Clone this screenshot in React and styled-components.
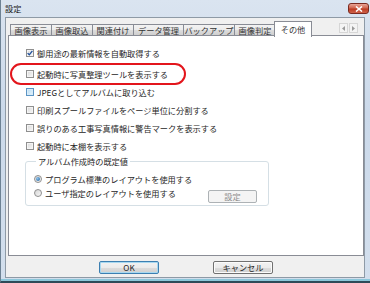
import React from "react"
import styled, { createGlobalStyle } from "styled-components"

const GlobalStyle = createGlobalStyle`
    html, body {
        margin: 0;
        padding: 0;
        background: #ffffff;
    }
    body {
        font-family: "Noto Sans CJK JP", "Noto Sans", sans-serif;
        font-size: 8.2px;
        color: #262626;
    }
`;

const Frame = styled.div`
    width: 370px;
    height: 283px;
    box-sizing: border-box;
    display: flex;
    flex-direction: column;
    background: linear-gradient(#dae4f0, #cbd9ea 40%, #d3dfed);
    border-left: 1px solid #6d8294;
    border-bottom: 2px solid #2e4a58;
    box-shadow: inset 0 -2px 0 #8cc7da;
    padding: 0 5px 3px 4px;
`;

const TitleBar = styled.div`
    height: 17px;
    display: flex;
    justify-content: space-between;
    align-items: flex-start;
`;

const Title = styled.div`
    padding-top: 3px;
    line-height: 10px;
    color: #1a1a1a;
`;

const CloseButton = styled.div`
    width: 21px;
    height: 11px;
    margin-top: 3px;
    margin-right: -4px;
    border: 1px solid #7a2a20;
    border-radius: 3px;
    box-sizing: border-box;
    background: linear-gradient(#e8a597, #d0654f 45%, #bb3b22 55%, #d0624a);
    display: flex;
    align-items: center;
    justify-content: center;
`;

const Client = styled.div`
    flex: 1;
    background: #f0f0f0;
    border: 1px solid #8e9aa6;
    display: flex;
    flex-direction: column;
    padding: 3px 0 0 1px;
`;

const TabStrip = styled.div`
    height: 15px;
    display: flex;
    align-items: flex-end;
    padding-left: 3px;
    position: relative;
    z-index: 1;
`;

const Tab = styled.div`
    width: ${p => p.w}px;
    box-sizing: border-box;
    height: ${p => (p.active ? 16 : 12)}px;
    margin-bottom: ${p => (p.active ? -1 : 0)}px;
    margin-left: ${p => (p.active ? -2 : 0)}px;
    margin-right: ${p => (p.active ? -2 : 0)}px;
    border: 1px solid #898c95;
    border-right-width: ${p => (p.last || p.active ? 1 : 0)}px;
    border-bottom: ${p => (p.active ? "none" : "1px solid #898c95")};
    background: ${p => (p.active ? "#ffffff" : "linear-gradient(#f3f3f3, #ebebeb 50%, #dddddd 51%, #cfcfcf)")};
    color: #333333;
    display: flex;
    align-items: ${p => (p.active ? "flex-start" : "center")};
    justify-content: center;
    padding-top: ${p => (p.active ? 2 : 0)}px;
    line-height: 10px;
    white-space: nowrap;
`;

const Spinner = styled.div`
    margin-left: auto;
    margin-right: 6px;
    margin-bottom: 3px;
    display: flex;
    gap: 1px;
`;

const SpinButton = styled.div`
    width: 7px;
    height: 8px;
    background: #f4f4f4;
    border: 1px solid #d6d6d6;
    display: flex;
    align-items: center;
    justify-content: center;
`;

const Panel = styled.div`
    position: relative;
    width: 356px;
    height: 221px;
    box-sizing: border-box;
    margin-left: 1px;
    margin-top: -1px;
    background: #ffffff;
    border: 1px solid #898c95;
    padding: 8px 0 0 17px;
    display: flex;
    flex-direction: column;
`;

const Row = styled.div`
    height: 18px;
    display: flex;
    align-items: center;
    gap: 3px;
    margin-bottom: ${p => p.gapBelow || 0}px;
    white-space: nowrap;
`;

const Box = styled.div`
    width: 8px;
    height: 8px;
    box-sizing: border-box;
    border: 1px solid ${p => (p.hover ? "#5c95c4" : "#8f8f8f")};
    background: ${p => (p.hover ? "linear-gradient(135deg, #b9dcf3, #e6f4fc)" : "linear-gradient(135deg, #d8d8d8, #f7f7f7)")};
    box-shadow: inset 0 0 0 1px ${p => (p.hover ? "#d8ecf9" : "#f4f4f4")};
    display: flex;
    align-items: center;
    justify-content: center;
    flex-shrink: 0;
`;

const Highlight = styled.div`
    position: absolute;
    left: 1px;
    top: 27px;
    width: 176px;
    height: 22px;
    box-sizing: border-box;
    border: 2px solid #e3151c;
    border-radius: 11px;
    pointer-events: none;
`;

const Group = styled.fieldset`
    margin: 0 0 0 -1px;
    width: 244px;
    box-sizing: border-box;
    border: 1px solid #d5dfe5;
    border-radius: 3px;
    padding: 5px 11px 5px 8px;
    display: flex;
    flex-direction: column;
`;

const Legend = styled.legend`
    padding: 0 2px;
    margin-left: 2px;
    line-height: 12px;
`;

const RadioRow = styled.div`
    height: 14px;
    display: flex;
    align-items: center;
    gap: 3px;
    white-space: nowrap;
`;

const Radio = styled.div`
    width: 8px;
    height: 8px;
    box-sizing: border-box;
    border-radius: 50%;
    border: 1px solid #8f8f8f;
    background: linear-gradient(135deg, #d6d6d6, #f7f7f7);
    display: flex;
    align-items: center;
    justify-content: center;
    flex-shrink: 0;
    &::after {
        content: "";
        display: ${p => (p.checked ? "block" : "none")};
        width: 4px;
        height: 4px;
        border-radius: 50%;
        background: radial-gradient(circle at 35% 35%, #8cc2ec, #1d5e9c);
    }
`;

const SmallButton = styled.div`
    margin-left: auto;
    margin-top: 6px;
    width: 49px;
    height: 13px;
    box-sizing: border-box;
    border: 1px solid #adb2b5;
    border-radius: 2px;
    background: #f4f4f4;
    color: #8d8d8d;
    display: flex;
    align-items: center;
    justify-content: center;
    line-height: 10px;
`;

const ButtonBar = styled.div`
    flex: 1;
    display: flex;
    align-items: center;
    padding-left: 92px;
    gap: 54px;
    padding-top: 1px;
`;

const DialogButton = styled.div`
    width: 60px;
    height: 13px;
    box-sizing: border-box;
    border: 1px solid ${p => (p.primary ? "#3c7fb1" : "#707070")};
    box-shadow: ${p => (p.primary ? "inset 0 0 0 1px #a8d8f0" : "inset 0 0 0 1px #fbfbfb")};
    border-radius: 2px;
    background: linear-gradient(#f2f2f2, #ebebeb 50%, #dddddd 51%, #cfcfcf);
    display: flex;
    align-items: center;
    justify-content: center;
    line-height: 10px;
`;

const tabs = [
    { label: "画像表示", w: 41 },
    { label: "画像取込", w: 41 },
    { label: "関連付け", w: 41 },
    { label: "データ管理", w: 50 },
    { label: "バックアップ", w: 51 },
    { label: "画像判定", w: 42 },
    { label: "その他", w: 38, active: true },
]

const options = [
    { label: "御用途の最新情報を自動取得する", checked: true, gap: 3 },
    { label: "起動時に写真整理ツールを表示する" },
    { label: "JPEGとしてアルバムに取り込む", hover: true },
    { label: "印刷スプールファイルをページ単位に分割する" },
    { label: "誤りのある工事写真情報に警告マークを表示する" },
    { label: "起動時に本棚を表示する" },
]

function Check() {
    return (
        <svg width="6" height="6" viewBox="0 0 6 6">
            <path d="M0.6 3.1 L2.3 4.8 L5.4 0.8" fill="none" stroke="#1e4f9b" strokeWidth="1.3" />
        </svg>
    )
}

function App() {
    return (
        <>
            <GlobalStyle />
            <Frame>
                <TitleBar>
                    <Title>設定</Title>
                    <CloseButton>
                        <svg width="8" height="6" viewBox="0 0 8 6">
                            <path d="M1 0.5 L7 5.5 M7 0.5 L1 5.5" stroke="#ffffff" strokeWidth="1.6" />
                        </svg>
                    </CloseButton>
                </TitleBar>
                <Client>
                    <TabStrip>
                        {tabs.map((t, i) => (
                            <Tab key={t.label} w={t.w} active={t.active} last={i === tabs.length - 2}>
                                {t.label}
                            </Tab>
                        ))}
                        <Spinner>
                            <SpinButton>
                                <svg width="3" height="5" viewBox="0 0 3 5"><path d="M3 0 L0 2.5 L3 5 Z" fill="#9a9a9a" /></svg>
                            </SpinButton>
                            <SpinButton>
                                <svg width="3" height="5" viewBox="0 0 3 5"><path d="M0 0 L3 2.5 L0 5 Z" fill="#9a9a9a" /></svg>
                            </SpinButton>
                        </Spinner>
                    </TabStrip>
                    <Panel>
                        {options.map(o => (
                            <Row key={o.label} gapBelow={o.gap}>
                                <Box hover={o.hover}>{o.checked && <Check />}</Box>
                                <span>{o.label}</span>
                            </Row>
                        ))}
                        <Group>
                            <Legend>アルバム作成時の既定値</Legend>
                            <RadioRow>
                                <Radio checked />
                                <span>プログラム標準のレイアウトを使用する</span>
                            </RadioRow>
                            <RadioRow>
                                <Radio />
                                <span>ユーザ指定のレイアウトを使用する</span>
                                <SmallButton>設定</SmallButton>
                            </RadioRow>
                        </Group>
                        <Highlight />
                    </Panel>
                    <ButtonBar>
                        <DialogButton primary>OK</DialogButton>
                        <DialogButton>キャンセル</DialogButton>
                    </ButtonBar>
                </Client>
            </Frame>
        </>
    )
}

export default App
